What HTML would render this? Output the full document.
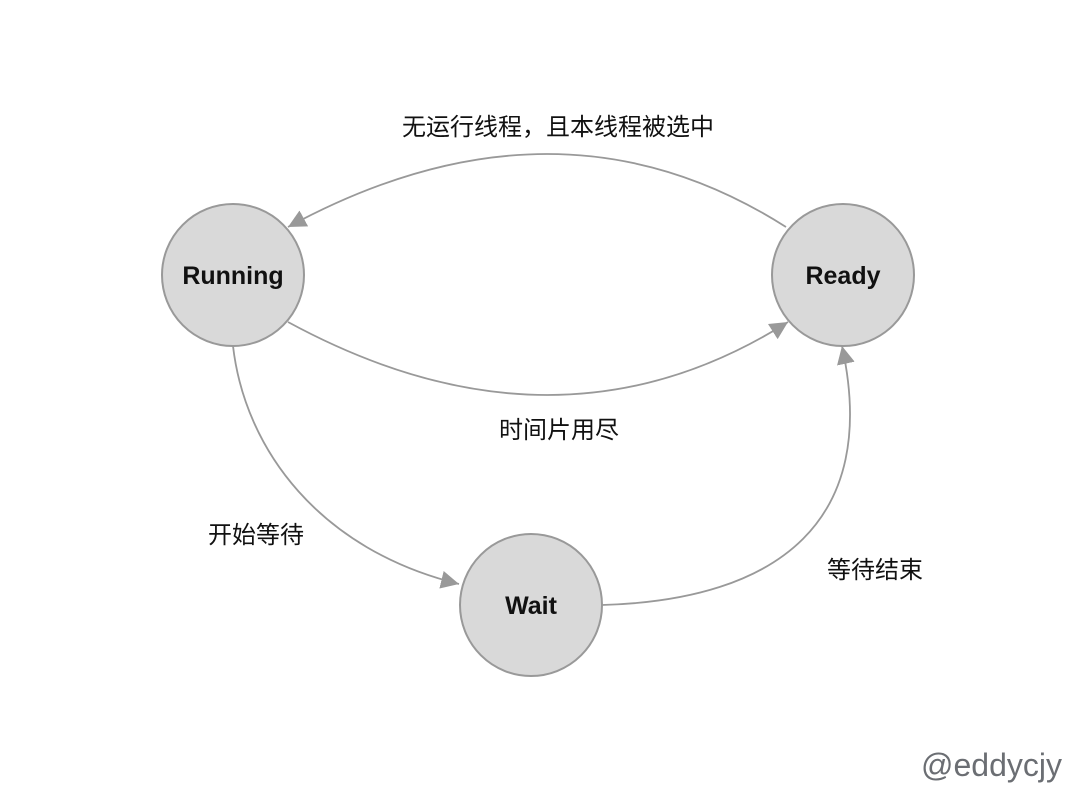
<!DOCTYPE html>
<html><head><meta charset="utf-8"><style>
html,body{margin:0;padding:0;background:#fff;width:1086px;height:806px;overflow:hidden}
svg{display:block}
.cn{font-family:"Liberation Sans","Noto Sans CJK SC",sans-serif;font-size:24px;fill:#111}
.nd{font-family:"Liberation Sans",sans-serif;font-size:25px;font-weight:bold;fill:#111}
</style></head><body>
<svg width="1086" height="806" viewBox="0 0 1086 806" xmlns="http://www.w3.org/2000/svg">
<defs>
<marker id="a" viewBox="0 0 10 10" refX="10" refY="5" markerWidth="18" markerHeight="18" markerUnits="userSpaceOnUse" orient="auto">
<path d="M0,0 L10,5 L0,10 z" fill="#999"/>
</marker>
</defs>
<g fill="none" stroke="#999" stroke-width="1.8">
<path d="M786,227 Q557,81 288,227" marker-end="url(#a)"/>
<path d="M288,322 Q557,468 788,322" marker-end="url(#a)"/>
<path d="M233,346 C245,450 320,550 459,584" marker-end="url(#a)"/>
<path d="M602,605 C780,600 880,520 842,346" marker-end="url(#a)"/>
</g>
<g fill="#d9d9d9" stroke="#999" stroke-width="2">
<circle cx="233" cy="275" r="71"/>
<circle cx="843" cy="275" r="71"/>
<circle cx="531" cy="605" r="71"/>
</g>
<text class="nd" x="233" y="284" text-anchor="middle">Running</text>
<text class="nd" x="843" y="284" text-anchor="middle">Ready</text>
<text class="nd" x="531" y="614" text-anchor="middle">Wait</text>
<text class="cn" x="558" y="135" text-anchor="middle">无运行线程，且本线程被选中</text>
<text class="cn" x="559" y="438" text-anchor="middle">时间片用尽</text>
<text class="cn" x="256" y="543" text-anchor="middle">开始等待</text>
<text class="cn" x="875" y="578" text-anchor="middle">等待结束</text>
<text x="921" y="776" font-family="Liberation Sans,sans-serif" font-size="32" fill="#6b6e73">@eddycjy</text>
</svg>
</body></html>
